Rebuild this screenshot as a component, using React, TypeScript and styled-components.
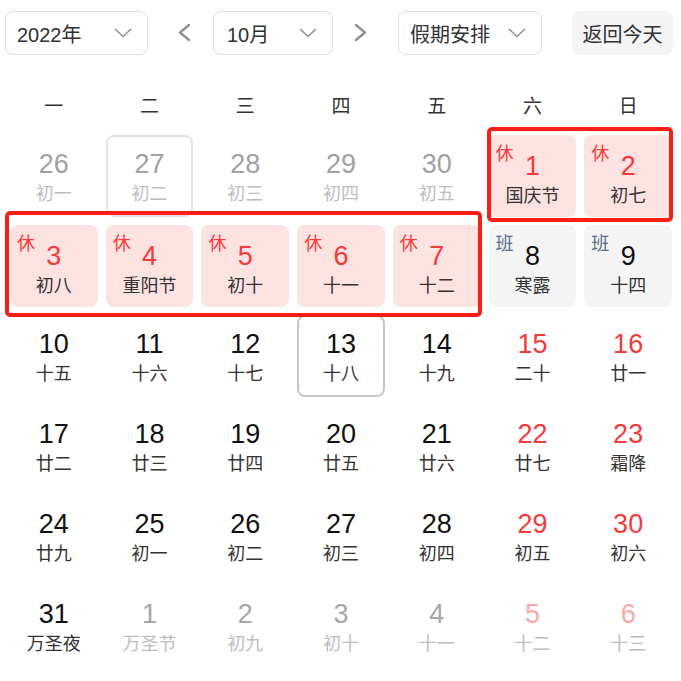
import React from 'react'
import styled, { createGlobalStyle, css } from 'styled-components'

const GlobalStyle = createGlobalStyle`
  body {
    margin: 0;
    background: #fff;
    font-family: "Liberation Sans", "Noto Sans CJK SC", sans-serif;
    color: #333;
  }
`

type Kind = 'prev' | 'normal' | 'weekend' | 'next' | 'nextWeekend'
type Mark = 'rest' | 'work' | undefined

interface Day {
  n: number
  lunar: string
  kind: Kind
  mark?: Mark
  today?: boolean
  hover?: boolean
}

const Page = styled.div`
  width: 681px;
  padding-top: 11px;
`

const Toolbar = styled.div`
  display: flex;
  align-items: center;
  height: 44px;
  padding-left: 5px;
`

const Select = styled.div<{ $w: number; $ml?: number }>`
  box-sizing: border-box;
  width: ${p => p.$w}px;
  height: 44px;
  margin-left: ${p => p.$ml || 0}px;
  padding: 0 15px 0 11px;
  border: 1px solid #dcdfe6;
  border-radius: 8px;
  display: flex;
  align-items: center;
  justify-content: space-between;
  font-size: 20px;
  color: #303133;
`

const ArrowBtn = styled.div<{ $ml: number }>`
  width: 24px;
  height: 44px;
  margin-left: ${p => p.$ml}px;
  display: flex;
  align-items: center;
  justify-content: center;
`

const TodayBtn = styled.div`
  box-sizing: border-box;
  width: 101px;
  height: 44px;
  margin-left: 30px;
  border-radius: 8px;
  background: #f4f4f5;
  display: flex;
  align-items: center;
  justify-content: center;
  font-size: 20px;
  color: #303133;
`

const Body = styled.div`
  position: relative;
  margin-top: 25px;
`

const WeekRow = styled.div`
  display: grid;
  grid-template-columns: repeat(7, 1fr);
  padding: 0 5px 0 6px;
  height: 48px;
  margin-bottom: 3px;
`

const WeekName = styled.div`
  display: flex;
  align-items: center;
  justify-content: center;
  font-size: 19px;
  color: #333;
`

const Grid = styled.div`
  display: grid;
  grid-template-columns: repeat(7, 1fr);
  grid-auto-rows: 90px;
  padding: 0 5px 0 6px;
`

const Slot = styled.div`
  padding: 4px;
`

const numColor: Record<Kind, string> = {
  prev: '#a0a0a0',
  normal: '#111',
  weekend: '#f53a3a',
  next: '#a6a6a6',
  nextWeekend: '#f9a8a8',
}

const Cell = styled.div<{ $mark?: Mark; $today?: boolean; $hover?: boolean }>`
  position: relative;
  box-sizing: border-box;
  height: 82px;
  border-radius: 8px;
  border: 2px solid transparent;
  display: flex;
  flex-direction: column;
  align-items: center;
  padding-top: 12px;
  ${p => p.$mark === 'rest' && css`
    background: #fde2e2;
    padding-top: 14px;
  `}
  ${p => p.$mark === 'work' && css`
    background: #f4f4f5;
    padding-top: 14px;
  `}
  ${p => p.$today && css`border-color: #c4c6cc;`}
  ${p => p.$hover && css`border-color: #e2e2e6;`}
`

const Num = styled.div<{ $kind: Kind; $rest?: boolean }>`
  font-size: 27px;
  line-height: 30px;
  color: ${p => (p.$rest ? '#f53a3a' : numColor[p.$kind])};
`

const Lunar = styled.div<{ $dim?: boolean }>`
  margin-top: 4px;
  font-size: 18px;
  line-height: 22px;
  color: ${p => (p.$dim ? '#bdbdbd' : '#333')};
`

const Tag = styled.span<{ $mark: Mark }>`
  position: absolute;
  top: 6px;
  left: 5px;
  font-size: 18px;
  line-height: 22px;
  color: ${p => (p.$mark === 'rest' ? '#f53a3a' : '#5d6a88')};
`

const Outline = styled.div<{ $x: number; $y: number; $w: number; $h: number }>`
  position: absolute;
  left: ${p => p.$x}px;
  top: ${p => p.$y}px;
  width: ${p => p.$w}px;
  height: ${p => p.$h}px;
  box-sizing: border-box;
  border: 4px solid #fa1e14;
  border-radius: 5px;
  pointer-events: none;
`

const Chevron = ({ dir }: { dir: 'down' | 'left' | 'right' }) => {
  if (dir === 'down')
    return (
      <svg width="18" height="10" viewBox="0 0 18 10">
        <polyline points="1,1 9,8.5 17,1" fill="none" stroke="#8d9097" strokeWidth="1.6" />
      </svg>
    )
  const pts = dir === 'left' ? '11,1 2,8.5 11,16' : '1,1 10,8.5 1,16'
  return (
    <svg width="12" height="18" viewBox="0 0 12 18">
      <polyline points={pts} fill="none" stroke="#8d9097" strokeWidth="2.4" strokeLinecap="round" strokeLinejoin="round" />
    </svg>
  )
}

const d = (n: number, lunar: string, kind: Kind, extra: Partial<Day> = {}): Day => ({ n, lunar, kind, ...extra })

const days: Day[] = [
  d(26, '初一', 'prev'), d(27, '初二', 'prev', { hover: true }), d(28, '初三', 'prev'), d(29, '初四', 'prev'), d(30, '初五', 'prev'),
  d(1, '国庆节', 'weekend', { mark: 'rest' }), d(2, '初七', 'weekend', { mark: 'rest' }),
  d(3, '初八', 'normal', { mark: 'rest' }), d(4, '重阳节', 'normal', { mark: 'rest' }), d(5, '初十', 'normal', { mark: 'rest' }),
  d(6, '十一', 'normal', { mark: 'rest' }), d(7, '十二', 'normal', { mark: 'rest' }),
  d(8, '寒露', 'normal', { mark: 'work' }), d(9, '十四', 'normal', { mark: 'work' }),
  d(10, '十五', 'normal'), d(11, '十六', 'normal'), d(12, '十七', 'normal'), d(13, '十八', 'normal', { today: true }),
  d(14, '十九', 'normal'), d(15, '二十', 'weekend'), d(16, '廿一', 'weekend'),
  d(17, '廿二', 'normal'), d(18, '廿三', 'normal'), d(19, '廿四', 'normal'), d(20, '廿五', 'normal'),
  d(21, '廿六', 'normal'), d(22, '廿七', 'weekend'), d(23, '霜降', 'weekend'),
  d(24, '廿九', 'normal'), d(25, '初一', 'normal'), d(26, '初二', 'normal'), d(27, '初三', 'normal'),
  d(28, '初四', 'normal'), d(29, '初五', 'weekend'), d(30, '初六', 'weekend'),
  d(31, '万圣夜', 'normal'), d(1, '万圣节', 'next'), d(2, '初九', 'next'), d(3, '初十', 'next'),
  d(4, '十一', 'next'), d(5, '十二', 'nextWeekend'), d(6, '十三', 'nextWeekend'),
]

const weekNames = ['一', '二', '三', '四', '五', '六', '日']

export default function App() {
  return (
    <Page>
      <GlobalStyle />
      <Toolbar>
        <Select $w={143}>
          <span>2022年</span>
          <Chevron dir="down" />
        </Select>
        <ArrowBtn $ml={24}><Chevron dir="left" /></ArrowBtn>
        <Select $w={120} $ml={17}>
          <span style={{ paddingLeft: 2 }}>10月</span>
          <Chevron dir="down" />
        </Select>
        <ArrowBtn $ml={16}><Chevron dir="right" /></ArrowBtn>
        <Select $w={144} $ml={25}>
          <span>假期安排</span>
          <Chevron dir="down" />
        </Select>
        <TodayBtn>返回今天</TodayBtn>
      </Toolbar>

      <Body>
        <WeekRow>
          {weekNames.map(w => <WeekName key={w}>{w}</WeekName>)}
        </WeekRow>
        <Grid>
          {days.map((day, i) => {
            const dim = day.kind === 'prev' || day.kind === 'next' || day.kind === 'nextWeekend'
            return (
              <Slot key={i}>
                <Cell $mark={day.mark} $today={day.today} $hover={day.hover}>
                  {day.mark && <Tag $mark={day.mark}>{day.mark === 'rest' ? '休' : '班'}</Tag>}
                  <Num $kind={day.kind} $rest={day.mark === 'rest'}>{day.n}</Num>
                  <Lunar $dim={dim}>{day.lunar}</Lunar>
                </Cell>
              </Slot>
            )
          })}
        </Grid>
        <Outline $x={487} $y={47} $w={186} $h={95} />
        <Outline $x={5} $y={131} $w={477} $h={106} />
      </Body>
    </Page>
  )
}
